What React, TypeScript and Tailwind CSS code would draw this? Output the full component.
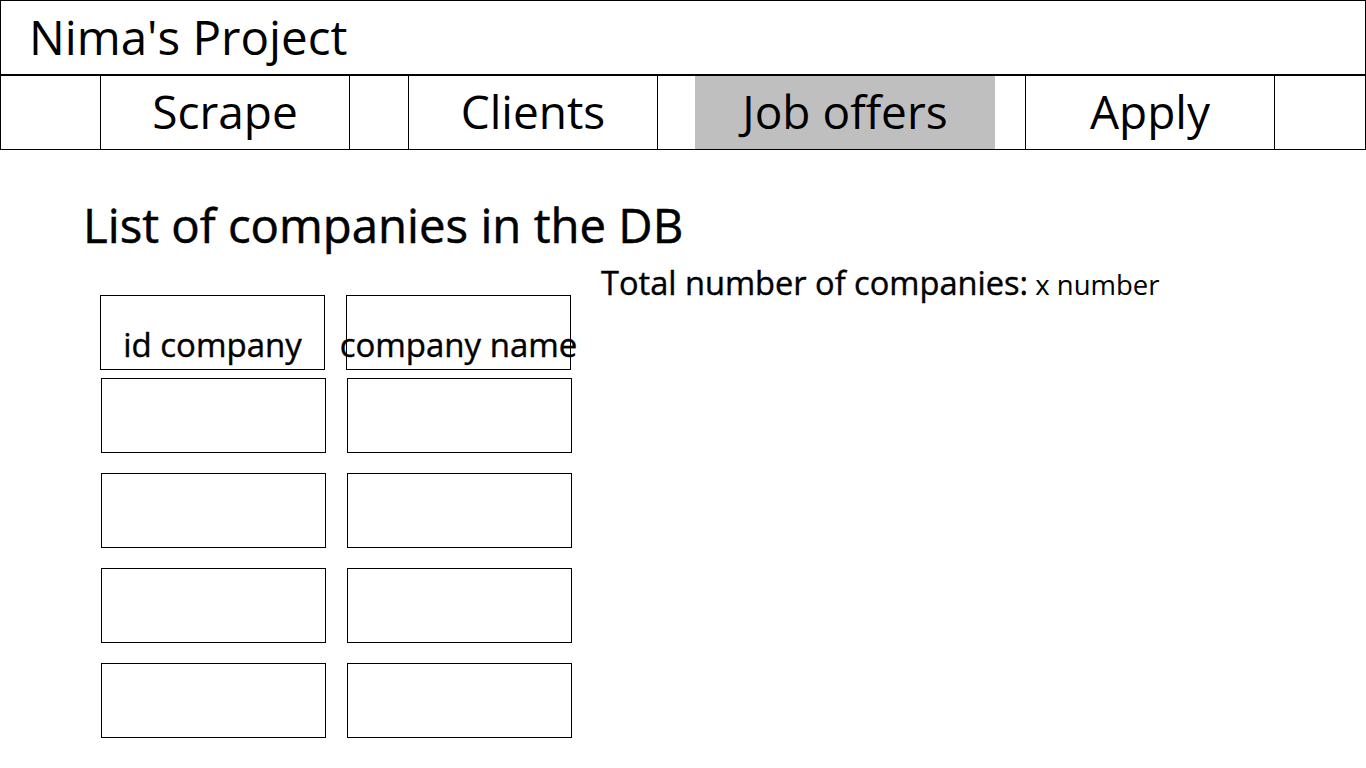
const font = "font-['Open_Sans',_'Noto_Sans',_sans-serif]";

function NavCell({ label, active, className }: { label: string; active?: boolean; className: string }) {
  return (
    <div
      className={`flex w-[250px] items-center justify-center pb-[4px] text-[46px] leading-[46px] ${
        active ? "w-[300px] bg-[#bfbfbf]" : "border-x border-black"
      } ${className}`}
    >
      {label}
    </div>
  );
}

function HeaderCell({ label }: { label: string }) {
  return (
    <div className="flex h-[75px] w-[225px] justify-center whitespace-nowrap border border-black pt-[29px] text-[33px] leading-[40px] [-webkit-text-stroke:0.4px_black]">
      {label}
    </div>
  );
}

function Cell() {
  return <div className="h-[75px] w-[225px] border border-black" />;
}

export default function App() {
  const rows = [1, 2, 3, 4];
  return (
    <div className={`min-h-screen w-full bg-white text-black ${font}`}>
      <header className="flex h-[75px] items-center border border-black pb-[3px] pl-[28px] text-[47.5px] leading-[47px]">
        Nima&apos;s Project
      </header>
      <nav className="flex h-[75px] border border-black">
        <NavCell label="Scrape" className="ml-[99px]" />
        <NavCell label="Clients" className="ml-[58px]" />
        <NavCell label="Job offers" active className="ml-[37px]" />
        <NavCell label="Apply" className="ml-[30px]" />
      </nav>

      <main className="pt-[40px]">
        <h1 className="pl-[83px] text-[47.3px] leading-[69px] [-webkit-text-stroke:0.5px_black]">
          List of companies in the DB
        </h1>
        <div className="mt-[4px] flex items-start pl-[100px]">
          <div className="mt-[32px] flex w-[472px] flex-col">
            <div className="flex gap-[21px]">
              <HeaderCell label="id company" />
              <HeaderCell label="company name" />
            </div>
            <div className="ml-[1px] mt-[8px] flex flex-col gap-[20px]">
              {rows.map((r) => (
                <div key={r} className="flex gap-[21px]">
                  <Cell />
                  <Cell />
                </div>
              ))}
            </div>
          </div>
          <p className="ml-[29px] whitespace-nowrap text-[32.6px] leading-[40px]">
            <span className="[-webkit-text-stroke:0.4px_black]">Total number of companies:</span>
            <span className="text-[27.5px]"> x number</span>
          </p>
        </div>
      </main>
    </div>
  );
}
